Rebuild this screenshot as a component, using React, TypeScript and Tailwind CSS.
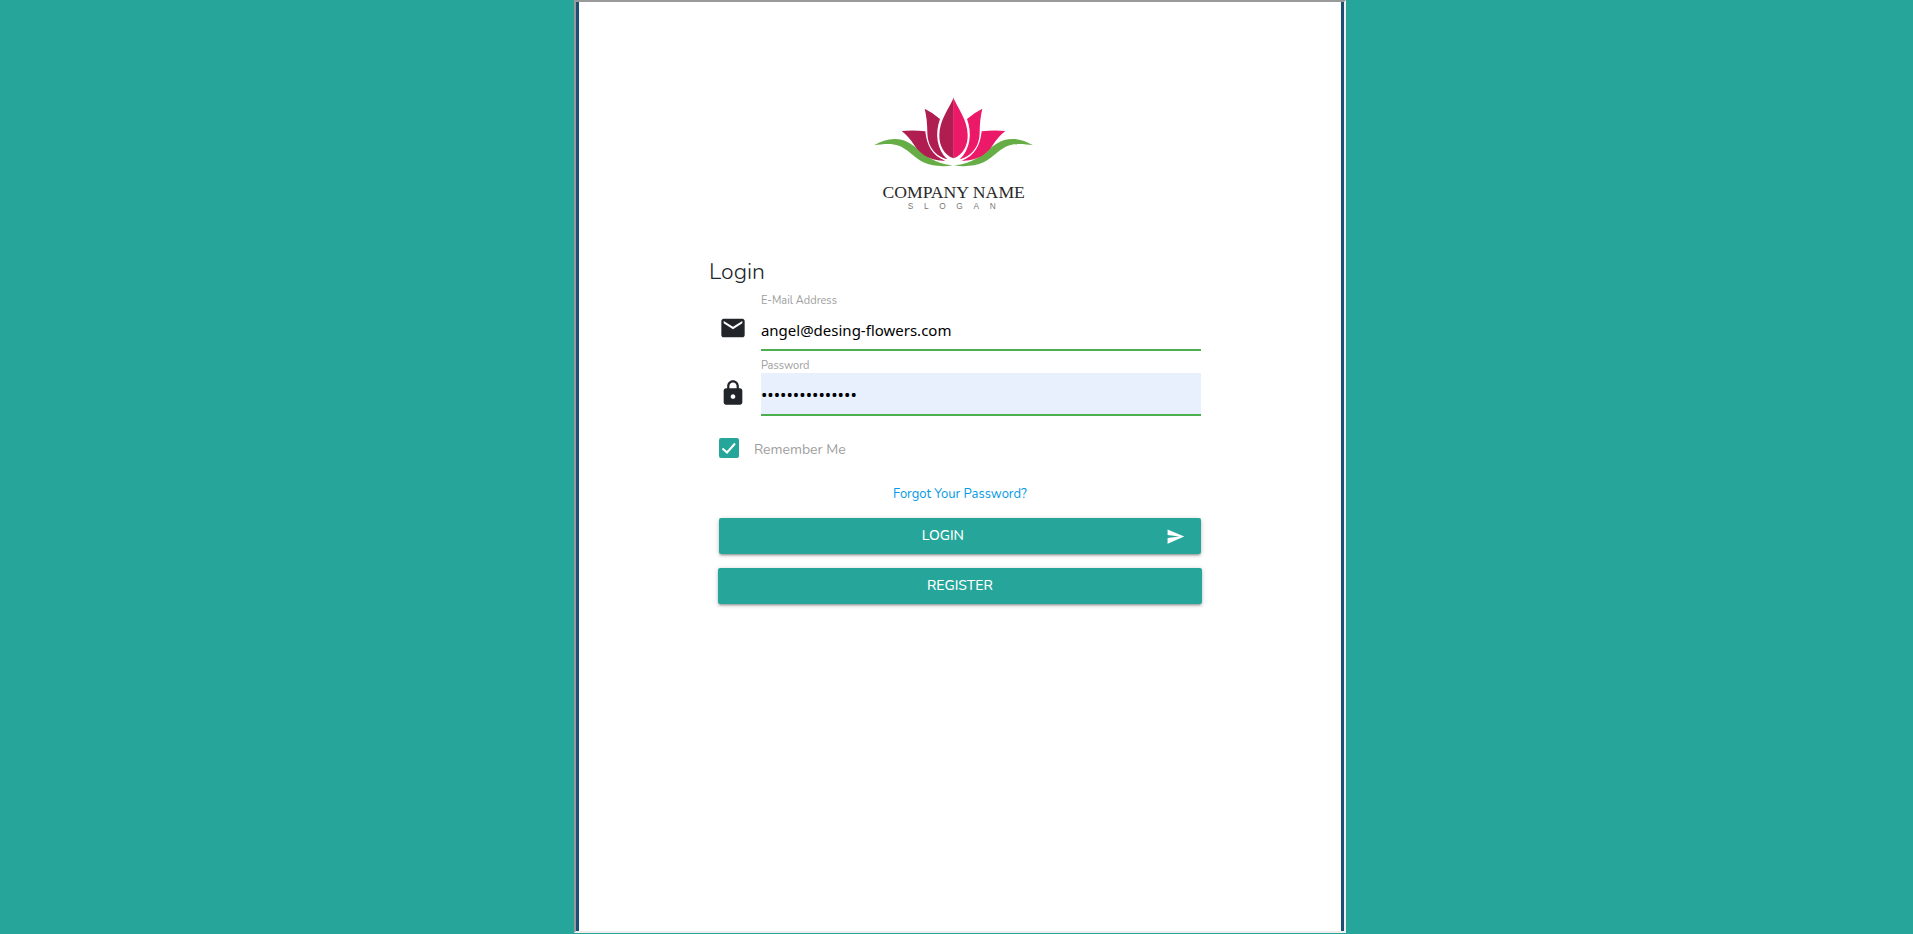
import { useState } from "react";
import { MdEmail, MdLock, MdSend } from "react-icons/md";

function Logo() {
  return (
    <svg viewBox="0 0 570 405" className="h-[135px] w-[190px]" role="img" aria-label="Company name">
      <path fill="#67ad45" d="M42 181C68 165 98 157 128 165C160 174 182 204 209 219C230 231 252 239 278 241C252 246 216 244 190 232C161 218 141 189 112 181C88 174 66 178 42 181Z" />
      <path fill="#67ad45" d="M519 181C493 165 463 157 433 165C401 174 379 204 352 219C331 231 309 239 283 241C309 246 345 244 371 232C400 218 420 189 449 181C473 174 495 178 519 181Z" />
      <path fill="#b01e51" d="M125 138Q160 134 196 139C200 180 216 213 256 227C210 230 180 206 163 181Q147 155 125 138Z" />
      <path fill="#ec1968" d="M436 138Q401 134 365 139C361 180 345 213 305 227C351 230 381 206 398 181Q414 155 436 138Z" />
      <path fill="#b01e51" d="M194 71Q219 83 240 102C224 145 230 194 262 223C217 209 203 177 202 143Q202 103 194 71Z" />
      <path fill="#ec1968" d="M367 71Q342 83 321 102C337 145 331 194 299 223C344 209 358 177 359 143Q359 103 367 71Z" />
      <path fill="#b01e51" d="M281 38C266 72 239 104 238 149C237 181 252 210 281 220Z" />
      <path fill="#ec1968" d="M280 38C295 72 322 104 323 149C324 181 309 210 280 220Z" />
      <text x="281" y="339" textAnchor="middle" fontSize="53" fill="#292929" fontFamily="'Liberation Serif', serif">COMPANY NAME</text>
      <text x="143" y="372" fontSize="25" letterSpacing="32" fill="#777" fontFamily="'Liberation Sans', sans-serif">SLOGAN</text>
    </svg>
  );
}

export default function App() {
  const [email, setEmail] = useState("angel@desing-flowers.com");
  const [password, setPassword] = useState("flowers-2020-ab");
  const [remember, setRemember] = useState(true);

  return (
    <div className="flex min-h-screen bg-[#26a69a] pb-px font-['Nunito','Noto_Sans',sans-serif] text-[#212529]">
      <main className="ml-[30%] flex w-[772px] max-w-full border-2 border-t-[#9a9a9a] border-r-[#eeeeee] border-b-[#eeeeee] border-l-[#9a9a9a]">
        <div className="flex grow flex-col items-center border-x-[3px] border-[#1b4f72] bg-white pt-[83px]">
          <div className="-ml-[10px]">
            <Logo />
          </div>
          <form className="mt-9 w-[502px] pr-[10px]" onSubmit={(e) => e.preventDefault()}>
            <h1 className="text-[23px] leading-8 font-light">Login</h1>
            <div className="flex pt-1 pl-[10px]">
              <MdEmail size={28} className="mt-[22px] mr-[14px] shrink-0" />
              <div className="flex grow flex-col">
                <label htmlFor="email" className="pt-[2px] text-[11px] leading-[14px] text-[#9e9e9e]">E-Mail Address</label>
                <input id="email" type="email" value={email} onChange={(e) => setEmail(e.target.value)} className="h-[43px] w-full border-b-2 border-[#4caf50] pt-[2px] font-['Noto_Sans',sans-serif] text-[15px] text-black outline-none" />
              </div>
            </div>
            <div className="flex pt-[6px] pl-[10px]">
              <MdLock size={28} className="mt-[22px] mr-[14px] shrink-0" />
              <div className="flex grow flex-col">
                <label htmlFor="password" className="pt-[2px] text-[11px] leading-[14px] text-[#9e9e9e]">Password</label>
                <input id="password" type="password" value={password} onChange={(e) => setPassword(e.target.value)} className="h-[43px] w-full border-b-2 border-[#4caf50] bg-[#e8f0fe] pt-[2px] font-['Noto_Sans',sans-serif] text-[17px] text-black outline-none" />
              </div>
            </div>
            <label className="mt-5 flex h-6 items-center gap-[15px] pl-[10px] text-sm text-[#9e9e9e]">
              <span className="grid size-5">
                <input type="checkbox" checked={remember} onChange={(e) => setRemember(e.target.checked)} className="peer col-start-1 row-start-1 size-5 appearance-none rounded-xs border-2 border-[#5a5a5a] checked:border-[#26a69a] checked:bg-[#26a69a]" />
                <svg viewBox="0 0 20 20" className="pointer-events-none invisible col-start-1 row-start-1 size-5 peer-checked:visible" fill="none" stroke="white" strokeWidth="2">
                  <path d="M3.5 10.5L8 14.5L16 5.5" />
                </svg>
              </span>
              <span className="pt-1">Remember Me</span>
            </label>
            <div className="mt-6 pl-[10px] text-center text-[13px] leading-5">
              <a href="#forgot" className="text-[#039be5]">Forgot Your Password?</a>
            </div>
            <div className="mt-[14px] pl-[10px]">
              <button type="submit" className="flex h-9 w-full items-center rounded-xs bg-[#26a69a] px-4 text-sm font-medium text-white shadow-[0_2px_2px_0_rgba(0,0,0,0.14),0_3px_1px_-2px_rgba(0,0,0,0.12),0_1px_5px_0_rgba(0,0,0,0.2)]">
                <span className="grow text-center">LOGIN</span>
                <MdSend size={19} className="ml-[15px]" />
              </button>
            </div>
            <div className="-mr-px mt-[14px] pl-[9px]">
              <a href="#register" className="flex h-9 items-center justify-center rounded-xs bg-[#26a69a] text-sm font-medium text-white shadow-[0_2px_2px_0_rgba(0,0,0,0.14),0_3px_1px_-2px_rgba(0,0,0,0.12),0_1px_5px_0_rgba(0,0,0,0.2)]">REGISTER</a>
            </div>
          </form>
        </div>
      </main>
    </div>
  );
}
